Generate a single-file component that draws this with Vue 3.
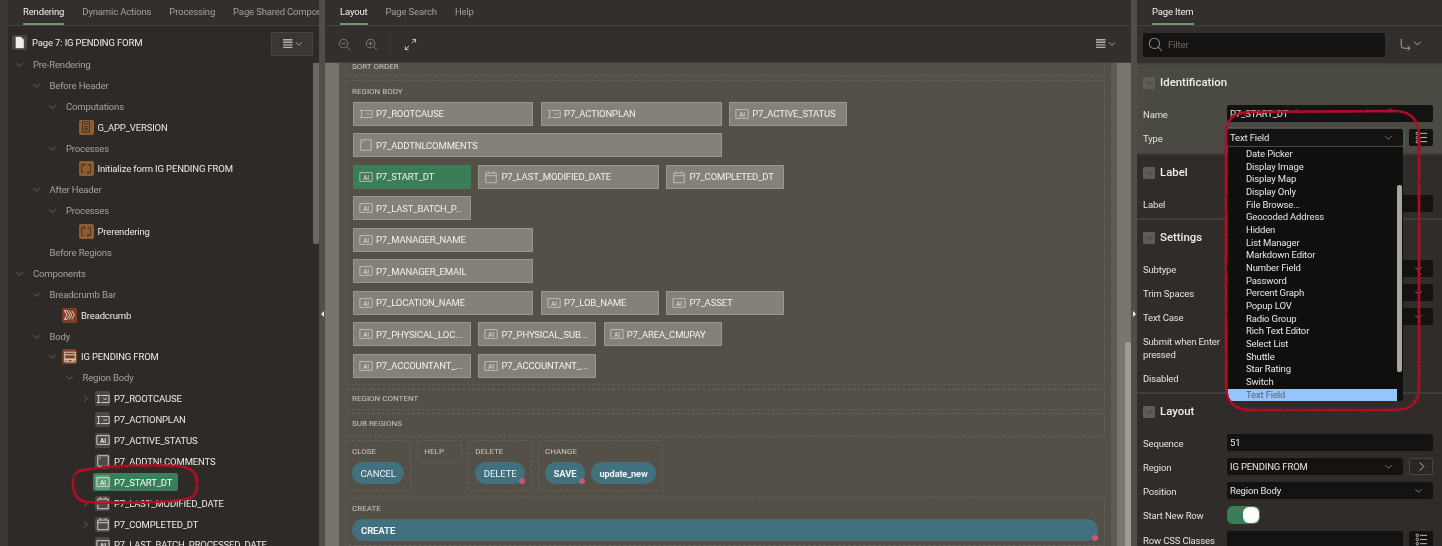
<script setup>
import { h } from "vue";

const leftTabs = ["Rendering", "Dynamic Actions", "Processing", "Page Shared Compon"];
const midTabs = ["Layout", "Page Search", "Help"];

const tree = [
  { label: "Pre-Rendering", depth: 0, open: true },
  { label: "Before Header", depth: 1, open: true },
  { label: "Computations", depth: 2, open: true },
  { label: "G_APP_VERSION", depth: 3, icon: "calc" },
  { label: "Processes", depth: 2, open: true },
  { label: "Initialize form IG PENDING FROM", depth: 3, icon: "process" },
  { label: "After Header", depth: 1, open: true },
  { label: "Processes", depth: 2, open: true },
  { label: "Prerendering", depth: 3, icon: "process" },
  { label: "Before Regions", depth: 1 },
  { label: "Components", depth: 0, open: true },
  { label: "Breadcrumb Bar", depth: 1, open: true },
  { label: "Breadcrumb", depth: 2, icon: "crumb" },
  { label: "Body", depth: 1, open: true },
  { label: "IG PENDING FROM", depth: 2, open: true, icon: "region" },
  { label: "Region Body", depth: 3, open: true },
  { label: "P7_ROOTCAUSE", depth: 4, closed: true, icon: "popup" },
  { label: "P7_ACTIONPLAN", depth: 4, icon: "popup" },
  { label: "P7_ACTIVE_STATUS", depth: 4, icon: "text" },
  { label: "P7_ADDTNLCOMMENTS", depth: 4, icon: "area" },
  { label: "P7_START_DT", depth: 4, icon: "text", selected: true },
  { label: "P7_LAST_MODIFIED_DATE", depth: 4, closed: true, icon: "date" },
  { label: "P7_COMPLETED_DT", depth: 4, closed: true, icon: "date" },
  { label: "P7_LAST_BATCH_PROCESSED_DATE", depth: 4, icon: "text" },
];

const layoutRows = [
  [["P7_ROOTCAUSE", 3, "popup"], ["P7_ACTIONPLAN", 3, "popup"], ["P7_ACTIVE_STATUS", 2, "text"]],
  [["P7_ADDTNLCOMMENTS", 6, "area"]],
  [["P7_START_DT", 2, "text", true], ["P7_LAST_MODIFIED_DATE", 3, "date"], ["P7_COMPLETED_DT", 2, "date"]],
  [["P7_LAST_BATCH_P...", 2, "text"]],
  [["P7_MANAGER_NAME", 3, "text"]],
  [["P7_MANAGER_EMAIL", 3, "text"]],
  [["P7_LOCATION_NAME", 3, "text"], ["P7_LOB_NAME", 2, "text"], ["P7_ASSET", 2, "text"]],
  [["P7_PHYSICAL_LOC...", 2, "text"], ["P7_PHYSICAL_SUB...", 2, "text"], ["P7_AREA_CMUPAY", 2, "text"]],
  [["P7_ACCOUNTANT_...", 2, "text"], ["P7_ACCOUNTANT_...", 2, "text"]],
];

const sections = [
  {
    title: "Identification",
    active: true,
    rows: [
      { label: "Name", kind: "input", value: "P7_START_DT" },
      { label: "Type", kind: "select", value: "Text Field", extra: "list", focus: true },
    ],
  },
  { title: "Label", rows: [{ label: "Label", kind: "input", value: "" }] },
  {
    title: "Settings",
    rows: [
      { label: "Subtype", kind: "select", value: "" },
      { label: "Trim Spaces", kind: "select", value: "" },
      { label: "Text Case", kind: "select", value: "" },
      { label: "Submit when Enter pressed", kind: "blank", tall: true },
      { label: "Disabled", kind: "blank" },
    ],
  },
  {
    title: "Layout",
    rows: [
      { label: "Sequence", kind: "input", value: "51" },
      { label: "Region", kind: "select", value: "IG PENDING FROM", extra: "next" },
      { label: "Position", kind: "select", value: "Region Body" },
      { label: "Start New Row", kind: "toggle" },
      { label: "Row CSS Classes", kind: "input", value: "", extra: "list" },
    ],
  },
];

const typeOptions = [
  "Date Picker", "Display Image", "Display Map", "Display Only", "File Browse...",
  "Geocoded Address", "Hidden", "List Manager", "Markdown Editor", "Number Field",
  "Password", "Percent Graph", "Popup LOV", "Radio Group", "Rich Text Editor",
  "Select List", "Shuttle", "Star Rating", "Switch", "Text Field",
];

// stroke paths on a 16x16 box
const iconPaths = {
  popup: ["M1 4h4M3 4v8M1 12h4", "M6 4h9v8H6", "M8.5 7l2 2 2-2"],
  area: ["M2 2h12v12H2z", "M4.5 4v2"],
  date: ["M2 3.5h12v11H2z", "M2 6.5h12", "M5 1.5v2M11 1.5v2"],
  text: ["M1 3h14v10H1z"],
  calc: ["M4 2h8v12H4z", "M5.5 4.5h5", "M5.5 7.5h5M5.5 9.5h5M5.5 11.5h5"],
  process: ["M6 3H3v9h2", "M10 3h3v9h-3", "M5 1.5L7 3 5 4.5", "M11 10.5L9 12l2 1.5"],
  crumb: ["M1.5 3h3l3 5-3 5h-3l3-5z", "M7 3l3 5-3 5", "M10 3l3 5-3 5"],
  region: ["M2 2.5h12v3H2z", "M2 5.5v5h12v-5", "M2 10.5h12v3H2z", "M4 12h2M10 12h2"],
};

const Icon = (props) =>
  h("svg", { viewBox: "0 0 16 16", class: "glyph", fill: "none", stroke: "currentColor", "stroke-width": 1 }, [
    ...(iconPaths[props.name] || []).map((d) => h("path", { d })),
    props.name === "text"
      ? h("text", { x: 8, y: 11, "text-anchor": "middle", "font-size": 7.5, "font-weight": 700, fill: "currentColor", stroke: "none" }, "AI")
      : null,
  ]);
Icon.props = ["name"];
</script>

<template>
  <div class="screen">
    <div class="edge"></div>

    <!-- left: page tree -->
    <aside class="left">
      <nav class="tabs">
        <span v-for="(t, i) in leftTabs" :key="t" class="tab" :class="{ on: i === 0 }">{{ t }}</span>
      </nav>
      <div class="page-head">
        <span class="page-icon">
          <svg viewBox="0 0 16 16"><path d="M3.5 1.5h6l3.5 3.5v9.5h-9.5z" fill="#f1efeb" stroke="#2e2a27" stroke-width=".6" /></svg>
        </span>
        <span class="page-title">Page 7: IG PENDING FORM</span>
        <button class="menu-btn">
          <svg viewBox="0 0 24 14" class="menu-glyph"><path d="M1 2h11M1 5h11M1 8h11M1 11h11" stroke="#b5b1aa" stroke-width="1.6" /><path d="M16 5l3.5 3.5L23 5" fill="none" stroke="#b5b1aa" /></svg>
        </button>
      </div>
      <div class="tree-wrap">
        <ul class="tree">
          <li
            v-for="(n, i) in tree"
            :key="i"
            class="node"
            :class="{ leaf: n.icon }"
            :style="{ paddingLeft: 6 + n.depth * 16.5 + 'px' }"
          >
            <span class="twist">
              <svg v-if="n.open" viewBox="0 0 10 10"><path d="M1.5 3.5L5 7l3.5-3.5" /></svg>
              <svg v-else-if="n.closed" viewBox="0 0 10 10"><path d="M3.5 1.5L7 5 3.5 8.5" /></svg>
            </span>
            <span v-if="n.icon" class="node-body" :class="{ picked: n.selected }">
              <span class="node-icon" :class="n.icon"><Icon :name="n.icon" /></span>
              <span>{{ n.label }}</span>
            </span>
            <span v-else class="node-head">{{ n.label }}</span>
          </li>
        </ul>
        <div class="thumb"></div>
      </div>
    </aside>

    <div class="split"><i class="arrow-left"></i></div>

    <!-- middle: layout -->
    <main class="mid">
      <nav class="tabs">
        <span v-for="(t, i) in midTabs" :key="t" class="tab" :class="{ on: i === 0 }">{{ t }}</span>
      </nav>
      <div class="toolbar">
        <svg viewBox="0 0 14 14" class="tool dim"><circle cx="6" cy="6" r="4.6" /><path d="M9.5 9.5L13 13M3.8 6h4.4" /></svg>
        <svg viewBox="0 0 14 14" class="tool dim"><circle cx="6" cy="6" r="4.6" /><path d="M9.5 9.5L13 13M3.8 6h4.4M6 3.8v4.4" /></svg>
        <span class="tool-sep"></span>
        <svg viewBox="0 0 14 14" class="tool bright"><path d="M1.5 12.5l4-4M8.5 5.5l4-4M1.5 9v3.5H5M9 1.5h3.5V5" /></svg>
        <svg viewBox="0 0 24 14" class="menu-glyph far"><path d="M1 2h11M1 5h11M1 8h11M1 11h11" stroke="#b5b1aa" stroke-width="1.6" /><path d="M16 5l3.5 3.5L23 5" fill="none" stroke="#b5b1aa" /></svg>
      </div>
      <div class="canvas">
        <div class="gutter-left"></div>
        <div class="canvas-body">
          <section class="box cut"><h4>SORT ORDER</h4></section>

          <section class="box region-body">
            <h4>REGION BODY</h4>
            <div v-for="(row, r) in layoutRows" :key="r" class="grid-row">
              <div
                v-for="(item, c) in row"
                :key="c"
                class="item"
                :class="{ green: item[3] }"
                :style="{ gridColumn: 'span ' + item[1] }"
              >
                <Icon :name="item[2]" />
                <span>{{ item[0] }}</span>
              </div>
            </div>
          </section>

          <section class="box thin"><h4>REGION CONTENT</h4></section>
          <section class="box thin sub"><h4>SUB REGIONS</h4></section>

          <div class="slots">
            <section class="box slot">
              <h4>CLOSE</h4>
              <div class="btns"><button class="pill">CANCEL</button></div>
            </section>
            <section class="box slot help"><h4>HELP</h4></section>
            <section class="box slot">
              <h4>DELETE</h4>
              <div class="btns"><button class="pill dot">DELETE</button></div>
            </section>
            <section class="box slot">
              <h4>CHANGE</h4>
              <div class="btns">
                <button class="pill dot bold">SAVE</button>
                <button class="pill bold lower">update_new</button>
              </div>
            </section>
          </div>

          <section class="box create">
            <h4>CREATE</h4>
            <button class="pill dot bold wide">CREATE</button>
          </section>
        </div>
        <div class="gutter-right"><div class="gutter-thumb"></div></div>
      </div>
    </main>

    <div class="split"><i class="arrow-right"></i></div>

    <!-- right: property editor -->
    <aside class="right">
      <nav class="tabs"><span class="tab on">Page Item</span></nav>
      <div class="filter-row">
        <label class="filter">
          <svg viewBox="0 0 14 14" class="tool dim big"><circle cx="6" cy="6" r="4.8" /><path d="M9.5 9.5L13 13" /></svg>
          <span>Filter</span>
        </label>
        <svg viewBox="0 0 24 14" class="go"><path d="M2 1v7q0 3 3 3h6M9 8.5l2.5 2.5L9 13.5" fill="none" stroke="#b5b1aa" /><path d="M16 4l3.5 3.5L23 4" fill="none" stroke="#b5b1aa" /></svg>
      </div>

      <section v-for="s in sections" :key="s.title" class="group" :class="{ active: s.active }">
        <header class="group-head">
          <span class="caret"><svg viewBox="0 0 10 10"><path d="M2 3.5L5 6.5l3-3" /></svg></span>
          <span class="group-title">{{ s.title }}</span>
        </header>
        <div class="props">
          <div v-for="p in s.rows" :key="p.label" class="prop" :class="{ tall: p.tall }">
            <span class="prop-label">{{ p.label }}</span>
            <div class="prop-ctl">
              <div v-if="p.kind === 'input'" class="field">{{ p.value }}</div>
              <div v-else-if="p.kind === 'select'" class="field select" :class="{ focus: p.focus }">
                <span>{{ p.value }}</span>
                <svg viewBox="0 0 10 10"><path d="M1.5 3.5L5 7l3.5-3.5" /></svg>
              </div>
              <div v-else-if="p.kind === 'toggle'" class="toggle"><i></i></div>
              <span v-if="p.extra === 'list'" class="side-btn">
                <svg viewBox="0 0 14 14"><circle cx="2.5" cy="2.5" r="1.3" /><circle cx="2.5" cy="7" r="1.3" /><circle cx="2.5" cy="11.5" r="1.3" /><path d="M5.5 2.5H13M5.5 7H13M5.5 11.5H13" /></svg>
              </span>
              <span v-else-if="p.extra === 'next'" class="side-btn outlined">
                <svg viewBox="0 0 14 14"><path d="M5 2.5L9.5 7 5 11.5" /></svg>
              </span>
            </div>
          </div>
        </div>
      </section>
    </aside>

    <!-- open Type dropdown -->
    <ul class="type-menu">
      <li v-for="o in typeOptions" :key="o" :class="{ current: o === 'Text Field' }">{{ o }}</li>
      <div class="menu-thumb"></div>
    </ul>

    <!-- red marker annotations -->
    <svg class="marks" viewBox="0 0 1442 546">
      <filter id="rough" x="-5%" y="-5%" width="110%" height="110%">
        <feTurbulence type="fractalNoise" baseFrequency="0.35" numOctaves="2" seed="4" />
        <feDisplacementMap in="SourceGraphic" scale="2.4" />
      </filter>
      <g filter="url(#rough)">
        <path d="M76 472C95 466 150 464 178 466C192 467 198 474 197 484C197 494 194 499 180 500C150 503 105 503 88 502C76 501 73 492 73 483C73 477 74 474 80 470" />
        <path d="M1226 136C1226 120 1232 113 1248 112L1396 111C1412 112 1419 120 1419 136L1419 386C1419 403 1411 410 1394 410L1252 410C1234 410 1226 402 1226 386Z" />
      </g>
    </svg>
  </div>
</template>

<style>
html,
body {
  margin: 0;
  background: #2e2a27;
}
</style>

<style scoped>
* {
  box-sizing: border-box;
}

.screen {
  position: relative;
  display: flex;
  width: 1442px;
  height: 546px;
  overflow: hidden;
  font-family: Roboto, "Noto Sans", sans-serif;
  font-size: 9.5px;
  letter-spacing: -0.15px;
  color: #e9e7e3;
  background: #2e2a27;
  filter: blur(0.3px);
}

.edge {
  width: 8px;
  flex: none;
  background: #3a3633;
}

.left {
  width: 311px;
  flex: none;
  display: flex;
  flex-direction: column;
  background: #2e2a27;
}

.split {
  position: relative;
  width: 6px;
  flex: none;
  background: #514d48;
}

.arrow-left,
.arrow-right {
  position: absolute;
  top: 311px;
  border: 3px solid transparent;
}

.arrow-left {
  left: -1px;
  border-right: 3px solid #eee;
}

.arrow-right {
  left: 2px;
  border-left: 3px solid #eee;
}

.tabs {
  display: flex;
  gap: 18px;
  height: 26px;
  flex: none;
  padding-left: 15px;
  background: #332f2c;
  border-bottom: 1px solid #45413d;
  overflow: hidden;
  white-space: nowrap;
}

.tab {
  height: 25px;
  padding-top: 6px;
  line-height: 12px;
  color: #a5a098;
  flex: none;
}

.tab.on {
  color: #f2f0ec;
  border-bottom: 2px solid #6b9a72;
}

.page-head {
  display: flex;
  align-items: flex-start;
  height: 28px;
  flex: none;
  padding: 6px 6px 0 4px;
}

.page-icon {
  width: 15px;
  height: 15px;
  margin: 3px 5px 0 0;
  background: #4a4643;
  border-radius: 2px;
}

.page-icon svg {
  display: block;
}

.page-title {
  flex: 1;
  margin-top: 5px;
  line-height: 12px;
  color: #f0eeea;
}

.menu-btn {
  display: flex;
  align-items: center;
  justify-content: center;
  width: 42px;
  height: 24px;
  padding: 0;
  background: #3a3633;
  border: 1px solid #494541;
  border-radius: 2px;
}

.menu-glyph {
  width: 21px;
  height: 12px;
}

.tree-wrap {
  position: relative;
  flex: 1;
  min-height: 0;
}

.tree {
  margin: 0;
  padding: 0;
  list-style: none;
}

.node {
  display: flex;
  align-items: center;
  height: 20.9px;
  color: #a8a39b;
  white-space: nowrap;
}

.twist {
  width: 15px;
  flex: none;
  display: flex;
  padding-left: 1px;
}

.twist svg {
  width: 9px;
  height: 9px;
  fill: none;
  stroke: #6f6b65;
}

.node-head {
  padding-left: 4px;
}

.node-body {
  display: flex;
  align-items: center;
  gap: 4px;
  height: 18px;
  color: #ecebe7;
  border-radius: 2px;
}

.node-body.picked {
  padding-right: 6px;
  margin-left: -2px;
  padding-left: 2px;
  background: #37805a;
  color: #fff;
}

.node-icon {
  width: 15px;
  height: 15px;
  display: flex;
  border-radius: 2px;
  background: #4d4946;
  color: #e3e0da;
}

.node-body.picked .node-icon {
  background: #5c9a78;
}

.node-icon.calc,
.node-icon.process {
  background: #8f5d33;
  color: #3d2b1c;
}

.node-icon.crumb {
  background: #7c3f25;
  color: #f3e2d6;
}

.node-icon.region {
  background: #7a4429;
  color: #f0ddd0;
}

.glyph {
  width: 14px;
  height: 14px;
  margin: auto;
  flex: none;
}

.thumb {
  position: absolute;
  top: 9px;
  right: 0;
  width: 6px;
  height: 181px;
  background: #6b6762;
  border-radius: 0 0 2px 2px;
}

.mid {
  width: 806px;
  flex: none;
  display: flex;
  flex-direction: column;
}

.toolbar {
  display: flex;
  align-items: center;
  height: 37px;
  flex: none;
  padding: 0 15px 0 13px;
  background: #332f2c;
  border-bottom: 1px solid #45413d;
}

.tool {
  width: 13px;
  height: 13px;
  margin-right: 14px;
  fill: none;
  stroke-width: 1;
}

.tool.dim {
  stroke: #84807a;
}

.tool.big {
  width: 15px;
  height: 15px;
  margin-right: 5px;
}

.tool.bright {
  stroke: #cfcce0;
}

.tool-sep {
  width: 1px;
  height: 23px;
  margin: 0 13px 0 -2px;
  background: #3e3a37;
}

.far {
  margin-left: auto;
}

.canvas {
  flex: 1;
  min-height: 0;
  display: flex;
  background: #545048;
}

.gutter-left {
  width: 14px;
  flex: none;
  background: #78736d;
}

.canvas-body {
  width: 772px;
  flex: none;
  padding: 0 6px;
  display: flex;
  flex-direction: column;
  gap: 4px;
}

.gutter-right {
  flex: 1;
  position: relative;
  background: linear-gradient(90deg, #5f5b54 0 6px, #7b756f 6px);
}

.gutter-thumb {
  position: absolute;
  right: 0;
  top: 279px;
  bottom: 0;
  width: 6px;
  background: #a09b95;
  border-radius: 2px 2px 0 0;
}

.box {
  flex: none;
  border: 1px dashed #65615a;
  border-radius: 2px;
  padding: 5px 6px 0;
}

h4 {
  margin: 0;
  font-size: 8px;
  line-height: 10px;
  font-weight: 400;
  letter-spacing: 0;
  color: #cbc7bf;
}

.box.cut {
  height: 13px;
  padding-top: 0;
  border-top: none;
}

.box.cut h4 {
  margin-top: -1px;
}

.region-body {
  height: 305px;
  padding-top: 6px;
  display: flex;
  flex-direction: column;
  gap: 7.5px;
}

.region-body h4 {
  margin-bottom: -3px;
}

.grid-row {
  display: grid;
  grid-template-columns: repeat(12, 55.1px);
  column-gap: 7.6px;
  padding-left: 1px;
}

.item {
  display: flex;
  align-items: center;
  gap: 3px;
  height: 24px;
  padding-left: 5px;
  background: #868178;
  border: 1px solid #9a958d;
  color: #f2f0ec;
  overflow: hidden;
  white-space: nowrap;
}

.item .glyph {
  margin: 0;
  color: #c8c4bd;
}

.item.green {
  background: #3a7d56;
  border-color: #3a7d56;
}

.thin {
  height: 21px;
  padding-top: 4px;
}

.sub {
  height: 24px;
  margin-top: -1px;
  padding-top: 5px;
}

.slots {
  display: flex;
  gap: 6px;
  flex: none;
  height: 51px;
  margin-top: -1px;
}

.slot {
  height: 51px;
  padding: 6px 6px 0;
}

.slot.help {
  height: 23px;
  width: 45px;
}

.btns {
  display: flex;
  gap: 6px;
  margin-top: 5px;
}

.pill {
  position: relative;
  height: 22px;
  padding: 0 8.5px;
  border: none;
  border-radius: 11px;
  background: #41707e;
  color: #eef3f4;
  font: inherit;
  font-size: 9.6px;
  letter-spacing: -0.15px;
}

.pill.bold {
  font-weight: 700;
}

.lower {
  font-size: 9.2px;
}

.pill.dot::after {
  content: "";
  position: absolute;
  right: 0;
  bottom: 0;
  width: 6px;
  height: 6px;
  border-radius: 50%;
  background: #c25a78;
}

.create {
  flex: 1;
  margin-top: 2px;
  padding-top: 6px;
}

.wide {
  display: block;
  width: 746px;
  margin-top: 5px;
  padding-left: 9px;
  text-align: left;
}

.right {
  flex: 1;
  min-width: 0;
  display: flex;
  flex-direction: column;
  background: #302c29;
}

.right .tabs {
  padding-left: 15px;
}

.filter-row {
  display: flex;
  align-items: center;
  gap: 14px;
  height: 39px;
  flex: none;
  padding: 0 6px;
  background: #332f2c;
  border-bottom: 2px solid #45413d;
}

.filter {
  display: flex;
  align-items: center;
  width: 242px;
  height: 24px;
  padding-left: 5px;
  background: #151312;
  border-radius: 2px;
  color: #6e6a64;
}

.go {
  width: 23px;
  height: 13px;
}

.group {
  flex: none;
  padding: 11px 9px 6px 6px;
  border-bottom: 2px solid #403c39;
}

.group.active {
  background: #4a4a43;
  padding-bottom: 7px;
}

.group-head {
  display: flex;
  align-items: center;
  gap: 5px;
  height: 13px;
  font-size: 11.4px;
  font-weight: 500;
  letter-spacing: 0;
  color: #efeeea;
}

.group-title {
  margin-top: -1px;
}

.caret {
  width: 12px;
  height: 12px;
  display: flex;
  background: #5f5c57;
  border-radius: 1px;
}

.caret svg {
  width: 10px;
  margin: auto;
  fill: none;
  stroke: #3f3c39;
}

.props {
  display: flex;
  flex-direction: column;
  gap: 7px;
  margin-top: 16px;
}

.prop {
  display: flex;
  align-items: center;
  min-height: 17px;
}

.prop.tall {
  height: 30px;
}

.prop-label {
  width: 84px;
  flex: none;
  margin-top: 1px;
  line-height: 13px;
  color: #e4e2dd;
}

.prop-ctl {
  flex: 1;
  display: flex;
  gap: 6px;
  min-width: 0;
}

.field {
  flex: 1;
  height: 17px;
  padding: 0 3px;
  line-height: 18px;
  background: #151312;
  border-radius: 2px;
  color: #e9e7e3;
}

.select {
  display: flex;
  align-items: center;
  justify-content: space-between;
}

.select svg {
  width: 9px;
  height: 9px;
  margin-right: 7px;
  fill: none;
  stroke: #8d8983;
}

.focus {
  outline: 1px dotted #3e7d55;
  outline-offset: 1px;
}

.toggle {
  display: flex;
  align-items: center;
  justify-content: flex-end;
  width: 33px;
  height: 18px;
  padding-right: 1px;
  background: #3a7d56;
  border-radius: 6px;
}

.toggle i {
  width: 16px;
  height: 16px;
  background: #fff;
  border-radius: 6px;
}

.side-btn {
  display: flex;
  width: 24px;
  height: 17px;
  flex: none;
  background: #151312;
  border-radius: 2px;
}

.side-btn.outlined {
  border: 1px solid #4a4642;
  background: #2a2624;
}

.side-btn svg {
  width: 13px;
  height: 13px;
  margin: auto;
  fill: none;
  stroke: #c9c6c0;
}

.type-menu {
  position: absolute;
  top: 147px;
  left: 1228px;
  width: 175px;
  height: 254px;
  margin: 0;
  padding: 1px 6px 0 0;
  list-style: none;
  background: #100f0e;
  border-radius: 0 0 4px 4px;
  overflow: hidden;
  color: #e9e7e3;
}

.type-menu li {
  height: 12.68px;
  padding-left: 18px;
  line-height: 12.68px;
  white-space: nowrap;
}

.type-menu li.current {
  background: #97c5fb;
  color: #5d6167;
}

.menu-thumb {
  position: absolute;
  top: 38px;
  right: 1px;
  width: 5px;
  height: 187px;
  background: #a9a6a1;
  border-radius: 2px;
}

.marks {
  position: absolute;
  inset: 0;
  width: 1442px;
  height: 546px;
  fill: none;
  stroke: #b20f24;
  stroke-width: 2.6;
  pointer-events: none;
}
</style>
